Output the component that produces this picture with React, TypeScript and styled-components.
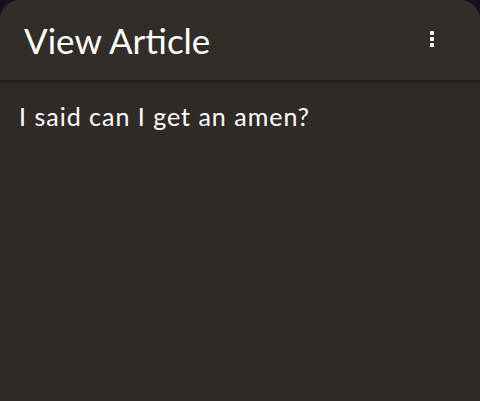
import React from "react";
import styled, { createGlobalStyle } from "styled-components";

const GlobalStyle = createGlobalStyle`
  html, body {
    margin: 0;
    padding: 0;
    background: #14141c;
  }
  #root {
    height: 401px;
  }
`;

const Screen = styled.div`
  height: 401px;
  width: 480px;
  background: #302b27;
  border-radius: 20px 20px 0 0;
  overflow: hidden;
  display: flex;
  flex-direction: column;
  font-family: Lato, "Open Sans", sans-serif;
  color: #ffffff;
`;

const TopBar = styled.header`
  height: 80px;
  flex-shrink: 0;
  background: #322d29;
  box-shadow: 0 2px 4px rgba(0, 0, 0, 0.35);
  display: flex;
  align-items: center;
  justify-content: space-between;
  padding: 0 24px;
  position: relative;
  z-index: 1;
`;

const Title = styled.h1`
  margin: 0;
  font-size: 35px;
  font-weight: 400;
  letter-spacing: 0;
`;

const MenuButton = styled.button`
  width: 48px;
  height: 48px;
  padding: 0;
  margin-top: -2px;
  border: none;
  background: transparent;
  display: flex;
  flex-direction: column;
  align-items: center;
  justify-content: center;
  gap: 2px;
`;

const Dot = styled.span`
  width: 4px;
  height: 4px;
  border-radius: 1px;
  background: #ffffff;
`;

const Body = styled.main`
  padding: 21px 19px;
`;

const Text = styled.p`
  margin: 0;
  font-family: Lato, "Open Sans", sans-serif;
  font-size: 25px;
  line-height: 30px;
  letter-spacing: 1px;
`;

export default function App() {
  return (
    <>
      <GlobalStyle />
      <Screen>
        <TopBar>
          <Title>View Article</Title>
          <MenuButton aria-label="More">
            <Dot />
            <Dot />
            <Dot />
          </MenuButton>
        </TopBar>
        <Body>
          <Text>I said can I get an amen?</Text>
        </Body>
      </Screen>
    </>
  );
}
